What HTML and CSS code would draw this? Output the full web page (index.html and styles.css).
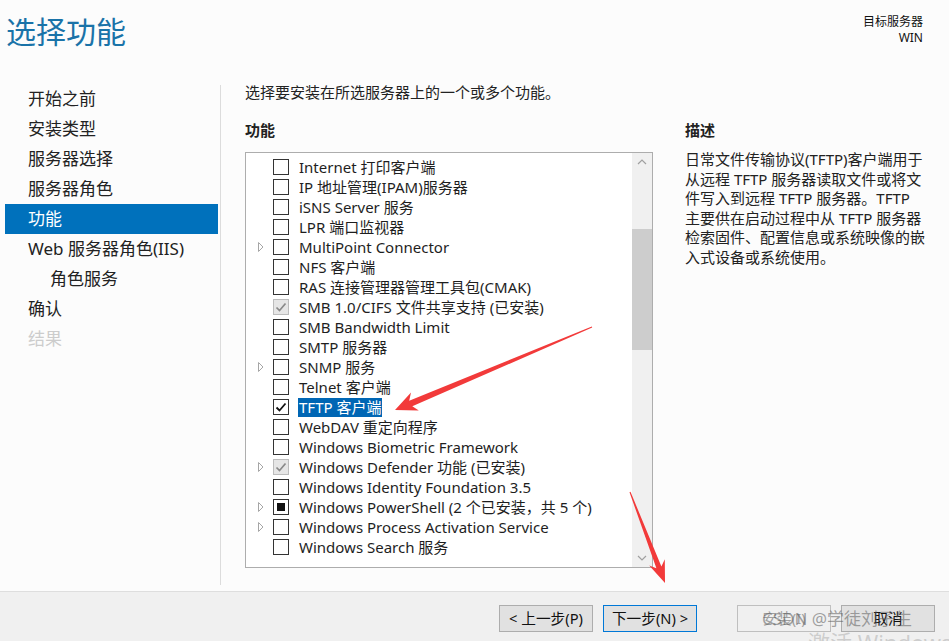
FILE: index.html
```html
<!DOCTYPE html>
<html lang="zh-CN">
<head>
<meta charset="utf-8">
<title>选择功能</title>
<link rel="stylesheet" href="styles.css">
</head>
<body>
<div class="page">
  <header class="header">
    <h1 class="title">选择功能</h1>
    <div class="target">
      <div>目标服务器</div>
      <div>WIN</div>
    </div>
  </header>

  <div class="main">
    <nav class="nav">
      <div class="nav-item">开始之前</div>
      <div class="nav-item">安装类型</div>
      <div class="nav-item">服务器选择</div>
      <div class="nav-item">服务器角色</div>
      <div class="nav-item active">功能</div>
      <div class="nav-item">Web 服务器角色(IIS)</div>
      <div class="nav-item sub">角色服务</div>
      <div class="nav-item">确认</div>
      <div class="nav-item disabled">结果</div>
    </nav>
    <div class="divider"></div>

    <section class="content">
      <p class="intro">选择要安装在所选服务器上的一个或多个功能。</p>
      <div class="columns">
        <div class="features">
          <h2 class="heading">功能</h2>
          <div class="listbox">
            <div class="list">
              <div class="row"><span class="exp"></span><span class="cb"></span><span class="label">Internet 打印客户端</span></div>
              <div class="row"><span class="exp"></span><span class="cb"></span><span class="label">IP 地址管理(IPAM)服务器</span></div>
              <div class="row"><span class="exp"></span><span class="cb"></span><span class="label">iSNS Server 服务</span></div>
              <div class="row"><span class="exp"></span><span class="cb"></span><span class="label">LPR 端口监视器</span></div>
              <div class="row"><span class="exp"><svg width="6" height="10" viewBox="0 0 6 10"><path d="M0.5 0.5 L5 5 L0.5 9.5 Z" fill="none" stroke="#a6a6a6" stroke-width="1"/></svg></span><span class="cb"></span><span class="label">MultiPoint Connector</span></div>
              <div class="row"><span class="exp"></span><span class="cb"></span><span class="label">NFS 客户端</span></div>
              <div class="row"><span class="exp"></span><span class="cb"></span><span class="label">RAS 连接管理器管理工具包(CMAK)</span></div>
              <div class="row"><span class="exp"></span><span class="cb cb-installed"><svg width="14" height="14" viewBox="0 0 14 14"><path d="M2.5 7.5 L5.5 10.5 L11.5 3.5" fill="none" stroke="#8a8a8a" stroke-width="1.7"/></svg></span><span class="label">SMB 1.0/CIFS 文件共享支持 (已安装)</span></div>
              <div class="row"><span class="exp"></span><span class="cb"></span><span class="label">SMB Bandwidth Limit</span></div>
              <div class="row"><span class="exp"></span><span class="cb"></span><span class="label">SMTP 服务器</span></div>
              <div class="row"><span class="exp"><svg width="6" height="10" viewBox="0 0 6 10"><path d="M0.5 0.5 L5 5 L0.5 9.5 Z" fill="none" stroke="#a6a6a6" stroke-width="1"/></svg></span><span class="cb"></span><span class="label">SNMP 服务</span></div>
              <div class="row"><span class="exp"></span><span class="cb"></span><span class="label">Telnet 客户端</span></div>
              <div class="row"><span class="exp"></span><span class="cb"><svg width="14" height="14" viewBox="0 0 14 14"><path d="M2.5 7.5 L5.5 10.5 L11.5 3.5" fill="none" stroke="#111" stroke-width="1.8"/></svg></span><span class="label selected">TFTP 客户端</span></div>
              <div class="row"><span class="exp"></span><span class="cb"></span><span class="label">WebDAV 重定向程序</span></div>
              <div class="row"><span class="exp"></span><span class="cb"></span><span class="label">Windows Biometric Framework</span></div>
              <div class="row"><span class="exp"><svg width="6" height="10" viewBox="0 0 6 10"><path d="M0.5 0.5 L5 5 L0.5 9.5 Z" fill="none" stroke="#a6a6a6" stroke-width="1"/></svg></span><span class="cb cb-installed"><svg width="14" height="14" viewBox="0 0 14 14"><path d="M2.5 7.5 L5.5 10.5 L11.5 3.5" fill="none" stroke="#8a8a8a" stroke-width="1.7"/></svg></span><span class="label">Windows Defender 功能 (已安装)</span></div>
              <div class="row"><span class="exp"></span><span class="cb"></span><span class="label">Windows Identity Foundation 3.5</span></div>
              <div class="row"><span class="exp"><svg width="6" height="10" viewBox="0 0 6 10"><path d="M0.5 0.5 L5 5 L0.5 9.5 Z" fill="none" stroke="#a6a6a6" stroke-width="1"/></svg></span><span class="cb"><span class="partial"></span></span><span class="label">Windows PowerShell (2 个已安装，共 5 个)</span></div>
              <div class="row"><span class="exp"><svg width="6" height="10" viewBox="0 0 6 10"><path d="M0.5 0.5 L5 5 L0.5 9.5 Z" fill="none" stroke="#a6a6a6" stroke-width="1"/></svg></span><span class="cb"></span><span class="label">Windows Process Activation Service</span></div>
              <div class="row"><span class="exp"></span><span class="cb"></span><span class="label">Windows Search 服务</span></div>
            </div>
            <div class="scrollbar">
              <div class="sb-btn"><svg width="10" height="6" viewBox="0 0 10 6"><path d="M1 5 L5 1 L9 5" fill="none" stroke="#a0a0a0" stroke-width="1.2"/></svg></div>
              <div class="sb-track"><div class="sb-thumb"></div></div>
              <div class="sb-btn"><svg width="10" height="6" viewBox="0 0 10 6"><path d="M1 1 L5 5 L9 1" fill="none" stroke="#a0a0a0" stroke-width="1.2"/></svg></div>
            </div>
          </div>
        </div>

        <div class="desc">
          <h2 class="heading">描述</h2>
          <p class="desc-text">日常文件传输协议(TFTP)客户端用于<br>从远程 TFTP 服务器读取文件或将文<br>件写入到远程 TFTP 服务器。TFTP<br>主要供在启动过程中从 TFTP 服务器<br>检索固件、配置信息或系统映像的嵌<br>入式设备或系统使用。</p>
        </div>
      </div>
    </section>
  </div>

  <footer class="footer">
    <button class="btn">&lt; 上一步(P)</button>
    <button class="btn btn-focus">下一步(N) &gt;</button>
    <button class="btn btn-disabled">安装(I)</button>
    <button class="btn">取消</button>
  </footer>

  <svg class="arrows" width="949" height="641" viewBox="0 0 949 641">
    <polygon fill="#f23a3a" points="395,410 418.8,410.5 412.3,406.3 592.2,327.6 591.8,326.4 409.2,400.7 411,392.5"/>
    <polygon fill="#f23a3a" points="665,583 664.8,559.2 661.4,566.4 630.5,491.8 629.5,492.2 656.4,568.2 649.2,565.6"/>
  </svg>
  <div class="watermark">CSDN @学徒刘子生</div>
  <div class="activate">激活 Windows</div>
</div>
</body>
</html>
```

FILE: styles.css
```css
* { box-sizing: border-box; }

html, body {
  margin: 0;
  padding: 0;
}

body {
  background: #fcfcfc;
  font-family: "Noto Sans", "Noto Sans CJK SC", sans-serif;
  color: #1e1e1e;
  font-size: 15px;
}

.page {
  position: relative;
  width: 949px;
  height: 641px;
  overflow: hidden;
  display: flex;
  flex-direction: column;
}

/* header */
.header {
  height: 82px;
  display: flex;
  justify-content: space-between;
  flex-shrink: 0;
}

.title {
  margin: 0;
  padding: 13px 0 0 6px;
  font-size: 30px;
  line-height: 38px;
  font-weight: 400;
  color: #1a73a8;
}

.target {
  padding: 14px 26px 0 0;
  font-size: 12px;
  line-height: 16px;
  text-align: right;
  color: #111;
}

/* main */
.main {
  display: flex;
  height: 509px;
  flex-shrink: 0;
}

.nav {
  width: 213px;
  margin-left: 5px;
  padding-top: 2px;
  flex-shrink: 0;
}

.nav-item {
  height: 30px;
  line-height: 30px;
  padding-left: 23px;
  font-size: 17px;
  color: #222;
  white-space: nowrap;
}

.nav-item.sub { padding-left: 45px; }

.nav-item.active {
  background: #0071bc;
  color: #fff;
}

.nav-item.disabled { color: #cccccc; }

.divider {
  width: 1px;
  background: #dcdcdc;
  margin: 3px 0 6px 2px;
  flex-shrink: 0;
}

.content {
  padding-left: 24px;
  flex: 1;
}

.intro {
  margin: 0;
  line-height: 20px;
  height: 20px;
  color: #222;
}

.columns {
  display: flex;
  gap: 32px;
}

.heading {
  margin: 18px 0 0 0;
  font-size: 15px;
  line-height: 20px;
  font-weight: 700;
  color: #222;
}

.features { width: 408px; flex-shrink: 0; }

.listbox {
  margin-top: 12px;
  height: 416px;
  border: 1px solid #adadad;
  background: #fff;
  display: flex;
}

.list {
  flex: 1;
  padding-top: 4px;
  overflow: hidden;
}

.row {
  height: 20px;
  display: flex;
  align-items: center;
  padding-left: 10px;
  white-space: nowrap;
}

.exp {
  width: 17px;
  height: 20px;
  display: flex;
  align-items: center;
  padding-left: 2px;
  flex-shrink: 0;
}

.exp svg { display: block; }

.cb {
  width: 16px;
  height: 16px;
  border: 1px solid #333;
  background: #fff;
  display: flex;
  align-items: center;
  justify-content: center;
  flex-shrink: 0;
}

.cb svg { display: block; }

.cb-installed {
  background: #e6e6e6;
  border-color: #bcbcbc;
}

.partial {
  width: 8px;
  height: 8px;
  background: #111;
}

.label {
  margin-left: 10px;
  line-height: 20px;
  color: #1e1e1e;
}

.label.selected {
  background: #0066b4;
  color: #fff;
  line-height: 19px;
  padding: 0 1px;
  margin-left: 9px;
}

.scrollbar {
  width: 20px;
  background: #f0f0f0;
  display: flex;
  flex-direction: column;
  flex-shrink: 0;
}

.sb-btn {
  height: 18px;
  display: flex;
  align-items: center;
  justify-content: center;
}

.sb-track {
  flex: 1;
  padding-top: 58px;
}

.sb-thumb {
  height: 121px;
  background: #cdcdcd;
}

.desc { width: 260px; }

.desc-text {
  margin: 10px 0 0 0;
  line-height: 19.6px;
  white-space: nowrap;
  color: #222;
}

/* footer */
.footer {
  flex: 1;
  background: #f0f0f0;
  border-top: 1px solid #dedede;
  display: flex;
  align-items: flex-start;
  justify-content: flex-end;
  padding: 13px 14px 0 0;
}

.btn {
  width: 94px;
  height: 27px;
  margin-left: 10px;
  border: 1px solid #adadad;
  background: #e1e1e1;
  font-family: "Noto Sans", "Noto Sans CJK SC", sans-serif;
  font-size: 14.67px;
  color: #111;
  padding: 0;
  line-height: 25px;
}

.btn-focus { border-color: #0078d7; }

.btn-disabled {
  margin-left: 40px;
  background: #f0f0f0;
  border-color: #bfbfbf;
  color: #a0a0a0;
}

/* overlays */
.arrows {
  position: absolute;
  left: 0;
  top: 0;
  pointer-events: none;
}

.watermark {
  position: absolute;
  left: 762px;
  top: 607px;
  font-size: 17px;
  line-height: 24px;
  color: rgba(90, 90, 90, 0.55);
  white-space: nowrap;
  pointer-events: none;
}

.activate {
  position: absolute;
  left: 808px;
  top: 628px;
  font-size: 22px;
  line-height: 28px;
  color: rgba(160, 160, 160, 0.45);
  white-space: nowrap;
  pointer-events: none;
}
```
